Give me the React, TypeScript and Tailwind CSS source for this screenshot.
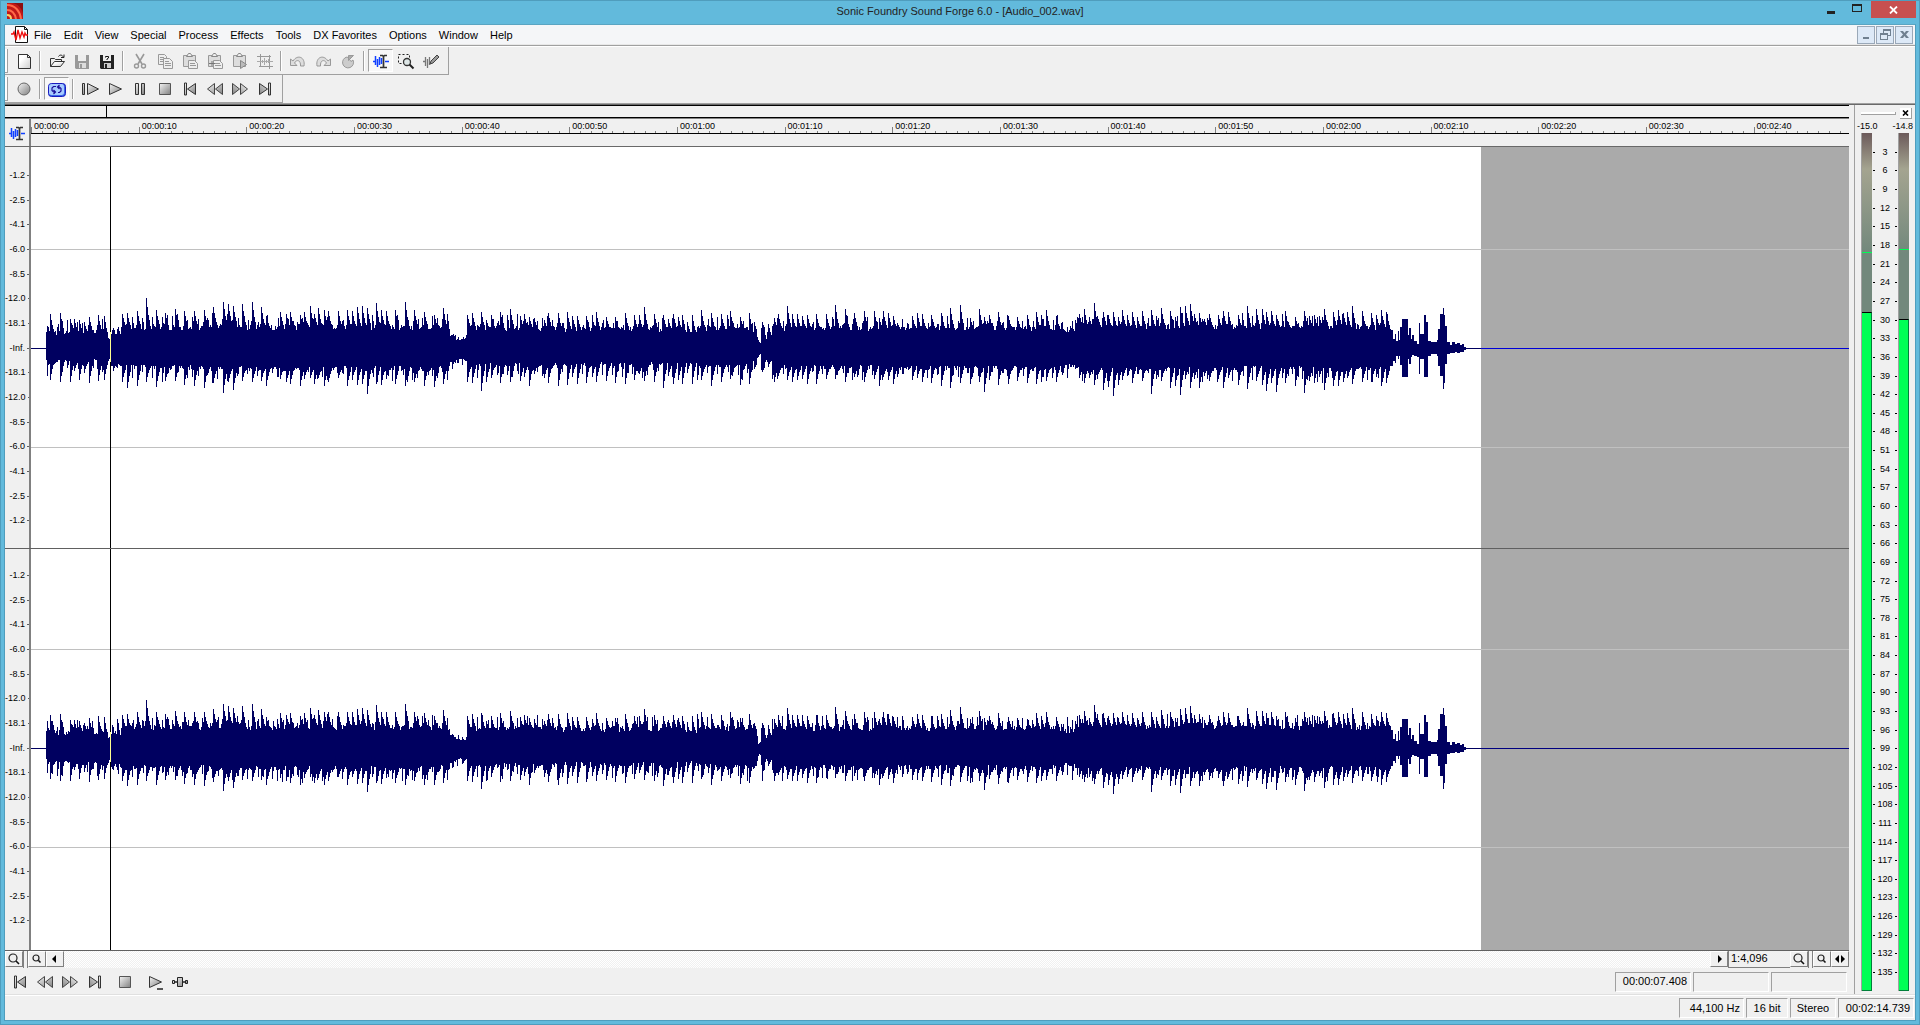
import type { ReactNode } from "react";

/* ---------- Waveform data ---------- */

// x position, height above the axis, depth below it
const BEATS = `50 34 31,60 35 33,70 29 33,74 29 22,79 28 31,84 26 24,89 31 34,98 33 32,104 32 31,122 34 33,127 35 39,137 37 37,146 50 33,
156 38 38,165 35 32,175 39 32,184 37 36,194 37 37,204 38 39,213 41 34,223 46 44,228 44 33,233 42 41,242 44 32,252 46 33,261 41 32,266 32 37,
280 36 30,286 34 33,290 36 35,300 33 37,304 36 30,310 42 29,314 34 35,318 40 29,324 38 37,328 37 33,338 37 29,347 38 37,352 37 29,357 41 36,
362 42 35,367 40 45,376 45 35,381 38 36,386 37 30,395 38 35,405 46 37,414 38 33,424 36 37,434 33 38,443 40 35,467 33 33,472 35 34,481 36 42,
486 28 33,491 33 29,500 36 34,510 39 33,520 32 32,524 34 28,529 31 37,534 30 25,544 28 29,548 35 34,558 35 37,567 36 36,572 32 28,577 32 35,
586 32 34,592 30 28,596 36 33,606 31 32,615 31 34,625 35 35,634 33 31,639 33 25,644 41 32,654 34 33,663 33 39,668 29 27,673 34 35,678 31 31,
682 33 35,687 26 24,692 33 35,701 38 31,711 35 37,721 34 33,730 37 30,740 31 36,749 35 35,754 26 20,762 26 23,768 24 18,774 30 33,778 34 27,
787 42 31,792 34 33,797 34 31,802 32 30,807 33 35,816 34 35,826 34 30,835 43 30,845 39 33,854 35 28,864 37 33,874 37 30,879 30 37,883 37 28,
888 35 31,893 32 35,912 32 31,917 35 28,922 34 33,931 33 34,941 35 37,950 40 39,960 43 34,970 30 35,979 39 33,984 31 43,989 33 31,998 36 36,
1008 32 35,1017 31 32,1027 30 34,1036 36 35,1041 33 33,1046 38 32,1056 32 33,1061 25 23,1070 22 18,1075 28 20,1079 34 29,1084 39 34,1089 31 29,
1094 45 36,1098 29 25,1103 36 41,1108 33 38,1113 36 47,1118 31 36,1122 38 31,1127 32 27,1132 36 34,1137 31 25,1142 37 32,1151 38 45,1156 32 30,
1161 40 32,1170 37 39,1175 31 37,1180 41 46,1185 42 30,1190 44 39,1194 34 30,1199 35 39,1204 29 27,1209 34 32,1218 33 30,1223 37 39,1228 36 29,
1238 33 36,1247 42 40,1256 39 32,1262 39 36,1266 36 42,1271 37 34,1276 33 43,1285 37 34,1295 31 37,1304 37 44,1309 32 32,1314 33 34,1319 32 28,
1324 39 41,1333 36 37,1338 38 37,1343 35 33,1347 36 29,1352 42 35,1362 37 33,1371 35 33,1376 33 28,1381 38 37,1386 36 34`
  .split(",")
  .map((row) => row.trim().split(" ").map(Number));

// solid body of the sound: from x on, height above and below
const BODY = [
  [46, 13, 10], [105, 9, 10], [110, 13, 14], [122, 18, 16], [210, 20, 17], [245, 18, 17], [440, 17, 16],
  [450, 11, 12], [456, 7, 9], [464, 8, 10], [467, 17, 14], [560, 16, 13], [685, 12, 10], [697, 17, 15],
  [750, 13, 12], [757, 4, 4], [761, 16, 16], [765, 8, 9], [772, 17, 16], [1060, 14, 14], [1076, 18, 17], [1391, 17, 16],
];

const TAIL = [
  [1391, 18, 17], [1393, 9, 12], [1395, 14, 14], [1396, 7, 7], [1398, 17, 10], [1399, 8, 7], [1400, 21, 16], [1402, 29, 28],
  [1408, 13, 10], [1409, 20, 15], [1411, 9, 8], [1412, 13, 6], [1414, 7, 7], [1417, 4, 8], [1419, 25, 25], [1420, 14, 10],
  [1424, 33, 28], [1426, 26, 28], [1428, 7, 7], [1431, 6, 5], [1437, 8, 7], [1438, 19, 17], [1440, 34, 27], [1443, 40, 40],
  [1444, 33, 34], [1445, 22, 15], [1447, 6, 5], [1450, 3, 4], [1452, 6, 4], [1455, 4, 3], [1457, 5, 4], [1460, 3, 3],
  [1462, 4, 3], [1464, 1, 1], [1466, 0, 0], [1481, 0, 0],
];

const DECAY = [1, 0.72, 0.48, 0.3];
const ORIGIN = 31;

function wavePath(seed: number, gain: number, axis: number) {
  let state = seed;
  const random = () => {
    state = (state * 1103515245 + 12345) % 2147483648;
    return state / 2147483648;
  };
  const level = (table: number[][], x: number) => {
    let found = table[0];
    for (const row of table) if (row[0] <= x) found = row;
    return found;
  };
  let d = "";
  for (let x = 46; x < 1481; x++) {
    let up: number;
    let down: number;
    if (x >= 1391) {
      [, up, down] = level(TAIL, x);
    } else {
      const [, bodyUp, bodyDown] = level(BODY, x);
      const pulse = x % 5 === 2 ? 13 : x % 5 === 3 ? 8 : 1;
      const loud = bodyUp > 11 ? 1 : 0.5;
      up = bodyUp + (pulse + 4) * random() * loud;
      down = bodyDown + (pulse + 4) * random() * loud;
      for (const [beat, high, low] of BEATS) {
        const age = x - beat;
        if (age === -1) {
          up = Math.max(up, bodyUp + (high - bodyUp) * 0.4 * random());
        } else if (age >= 0 && age < 4) {
          up = Math.max(up, bodyUp + (high * gain - bodyUp) * DECAY[age]);
          down = Math.max(down, bodyDown + (low * gain - bodyDown) * DECAY[age]);
        }
      }
    }
    const top = axis - Math.round(up);
    d += `M${x - ORIGIN} ${top}h1V${axis + 1 + Math.round(down)}h-1z`;
  }
  return d;
}

const DECIBELS = ["-1.2", "-2.5", "-4.1", "-6.0", "-8.5", "-12.0", "-18.1"];
const SCALE = [...DECIBELS, "-Inf.", ...[...DECIBELS].reverse()];
const CHANNELS = [
  { name: "Left channel", axis: 201, d: wavePath(7, 1, 201), rest: "#0000d8", pad: "pt-4 pb-[3px]" },
  { name: "Right channel", axis: 199, d: wavePath(91, 0.96, 199), rest: "#000080", pad: "pt-[14px] pb-[5px]" },
];
const TIMES = Array.from({ length: 17 }, (_, i) => `00:0${Math.floor(i / 6)}:${i % 6}0`);
const METER_MARKS = Array.from({ length: 45 }, (_, i) => (i + 1) * 3);
const MENUS = ["File", "Edit", "View", "Special", "Process", "Effects", "Tools", "DX Favorites", "Options", "Window", "Help"];

/* ---------- Icons ---------- */

const Icon = ({ children, size = 18 }: { children: ReactNode; size?: number }) => (
  <svg width={size} height={size} viewBox={`0 0 ${size} ${size}`} fill="none" aria-hidden="true" className="shrink-0">
    {children}
  </svg>
);

const NewIcon = () => (
  <Icon>
    <path d="M3.5 2.5h9l3 3v11h-12z" fill="url(#paper)" stroke="#333" />
    <path d="M12.5 2.5v3h3" stroke="#333" />
  </Icon>
);
const OpenIcon = () => (
  <Icon>
    <path d="M2.500 14.500v-8h4l1 1h6v2" stroke="#333" fill="#eee" />
    <path d="M2.500 14.500l4-5h10l-4 5z" stroke="#333" fill="url(#paper)" />
    <path d="M10.500 4.500c1-2 4-2 5 1m-2.500 0h3v-3" stroke="#222" />
  </Icon>
);
const SaveIcon = ({ dark }: { dark?: boolean }) => (
  <Icon>
    <path d="M2 3h14v14H3l-1-1z" fill={dark ? "#222" : "#999"} />
    <path d="M5 3h8v6H5z" fill="#eee" />
    <path d="M6 11h7v5H6z" fill={dark ? "#ccc" : "#ddd"} />
    <path d="M7 12h2v4H7z" fill={dark ? "#222" : "#999"} />
    {dark && <path d="M7.500 5.500v-1h3v1.500l-1.500 1v1" stroke="#111" />}
  </Icon>
);
const CutIcon = () => (
  <Icon>
    <path d="M5 2l6 10M13 2L7 12" stroke="#999" strokeWidth="1.600" />
    <circle cx="5.500" cy="14" r="2" stroke="#999" strokeWidth="1.400" />
    <circle cx="12.500" cy="14" r="2" stroke="#999" strokeWidth="1.400" />
  </Icon>
);
const CopyIcon = () => (
  <Icon>
    <path d="M2.500 2.500h6l2 2v8h-8z" fill="#eee" stroke="#999" />
    <path d="M4 5.500h4M4 7.500h3M4 9.500h3" stroke="#999" />
    <path d="M7.500 6.500h6l3 3v7h-9z" fill="#eee" stroke="#999" />
    <path d="M9 9.500h4M9 11.500h6M9 13.500h6" stroke="#999" />
  </Icon>
);
const PasteIcon = ({ mark }: { mark: "page" | "mix" | "play" }) => (
  <Icon>
    <path d="M2.500 3.500h12v11h-12z" fill="#ddd" stroke="#999" />
    <path d="M5.500 4.500l2-3h2l2 3z" fill="#eee" stroke="#888" />
    {mark === "play" ? (
      <path d="M9.500 8.500l6 4-6 4z" fill="#bbb" stroke="#888" />
    ) : (
      <>
        <path d="M7.500 8.500h6l3 3v5h-9z" fill="#eee" stroke="#999" />
        <path d="M9 11.500h5M9 13.500h6" stroke="#999" />
      </>
    )}
    {mark === "mix" && <path d="M3 11.500h6M6 9v5" stroke="#777" />}
  </Icon>
);
const TrimIcon = () => (
  <Icon>
    <path d="M1 4.500h14M4.500 2v13M13.500 3v14M3 14.500h14" stroke="#999" />
    <path d="M1 9.500h16M6.500 8v3M8.500 6v7M10.500 8v3M12.500 7v4" stroke="#aaa" />
  </Icon>
);
const UndoIcon = ({ flip }: { flip?: boolean }) => (
  <Icon>
    <g transform={flip ? "translate(18 0) scale(-1 1)" : undefined}>
      <path d="M1.500 7v6.500h6.500l-2.500-2.500c2-4 6.500-3 6 3h3.500c1.500-9-6.500-12-11-5z" fill="#ddd" stroke="#999" />
    </g>
  </Icon>
);
const RepeatIcon = () => (
  <Icon>
    <path d="M8 5A5.500 5.500 0 1 0 14 8l-2 1.500L9.500 6z" fill="#ccc" stroke="#999" />
    <path d="M9.500 8.500v-5h5z" fill="#aaa" stroke="#999" />
  </Icon>
);
const EditToolIcon = () => (
  <Icon>
    <path d="M1 9.500h3M3.500 4v9M5.500 7v8M7.500 5v8M9.500 6v6M13 9.500h4" stroke="#1040ff" strokeWidth="1.500" />
    <path d="M8 3.500h2.500l1 1 1-1H15M11.500 4v11M8 15.500h7" stroke="#333" strokeWidth="1.700" />
  </Icon>
);
const MagnifyToolIcon = () => (
  <Icon>
    <path d="M1.500 2.500h11v9h-11z" stroke="#222" strokeDasharray="2 2" />
    <circle cx="10" cy="10" r="3.500" fill="#dde6e6" stroke="#333" strokeWidth="1.300" />
    <path d="M12.500 12.500l4 4" stroke="#222" strokeWidth="2" />
  </Icon>
);
const PencilIcon = () => (
  <Icon>
    <path d="M1 9.500h2M3.500 5v9M5.500 7v9M7.500 5v8" stroke="#777" strokeWidth="1.300" />
    <path d="M8 12l1-3 6-6 2 2-6 6z" fill="#999" stroke="#444" />
  </Icon>
);
const RecordIcon = () => (
  <Icon>
    <circle cx="9" cy="9" r="6" fill="url(#metal)" stroke="#666" />
  </Icon>
);
const LoopIcon = () => (
  <Icon>
    <rect x=".5" y="3.500" width="17" height="13" rx="3" fill="#3a68e8" stroke="#1a1ac0" />
    <rect x="1" y="4" width="15" height="11" rx="2.500" fill="#a8ccff" />
    <path d="M8 6.500H5.500l-1.500 1.500v2.500l1.500 1.500H7M5.500 10l2 2-2 2M10 12.500h1.500L13 11V8.500L11.500 7H10M11.500 5l-2 2 2 2" stroke="#1c109a" strokeWidth="1.200" />
  </Icon>
);

const PlayIcon = ({ mode }: { mode?: "all" | "plug" }) => (
  <Icon>
    {mode === "all" && <path d="M1.500 3.500h2v11h-2z" fill="url(#metal)" stroke="#333" />}
    <path d={mode === "all" ? "M6.500 3.500l11 5.500-11 5.500z" : "M3.500 3.500l12 5.500-12 5.500z"} fill="url(#metal)" stroke="#333" />
    {mode === "plug" && <path d="M11 16h6" stroke="#222" strokeWidth="1.500" />}
  </Icon>
);
const PauseIcon = () => (
  <Icon>
    <path d="M4.500 3.500h3v11h-3zM10.500 3.500h3v11h-3z" fill="url(#metal)" stroke="#333" />
  </Icon>
);
const StopIcon = () => (
  <Icon>
    <path d="M3.500 3.500h11v11h-11z" fill="url(#metal)" stroke="#555" />
  </Icon>
);
const SkipIcon = ({ flip }: { flip?: boolean }) => (
  <Icon>
    <g transform={flip ? "translate(18 0) scale(-1 1)" : undefined}>
      <path d="M3.500 3v12h2V3zM14.500 3.500v11L6.500 9z" fill="url(#metal)" stroke="#333" />
    </g>
  </Icon>
);
const WindIcon = ({ flip }: { flip?: boolean }) => (
  <Icon>
    <g transform={flip ? "translate(18 0) scale(-1 1)" : undefined}>
      <path d="M8.500 3.500v11L1.500 9zM16.500 3.500v11L9.500 9z" fill="url(#metal)" stroke="#444" />
    </g>
  </Icon>
);
const SliderIcon = () => (
  <Icon>
    <path d="M3 9h12" stroke="#222" strokeWidth="1.500" />
    <path d="M1.500 7.500h2v3h-2zM14.500 7.500h2v3h-2zM6.500 4.500h5v9h-5z" fill="url(#metal)" stroke="#222" />
  </Icon>
);
const LensIcon = ({ small }: { small?: boolean }) => (
  <Icon size={12}>
    <circle cx="5" cy="5" r={small ? 3 : 4} stroke="#222" strokeWidth="1.200" fill="#eee" />
    <path d={small ? "M7.500 7.500l2 2" : "M8 8l3 3"} stroke="#111" strokeWidth="1.600" />
  </Icon>
);
const ArrowIcon = ({ d }: { d: string }) => (
  <Icon size={12}>
    <path d={d} fill="#000" />
  </Icon>
);

/* ---------- Controls ---------- */

const ToolButton = ({ label, active, children }: { label: string; active?: boolean; children: ReactNode }) => (
  <button
    type="button"
    aria-label={label}
    className={`flex h-[23px] w-[25px] shrink-0 items-center justify-center ${
      active ? "border border-t-[#a0a0a0] border-l-[#a0a0a0] border-r-white border-b-white bg-[#f8f8f8]" : ""
    }`}
  >
    {children}
  </button>
);

const Divider = () => (
  <div className="flex w-2 shrink-0 justify-center">
    <div className="h-5 w-0.5 border-l border-[#a0a0a0] bg-white" />
  </div>
);

const Toolbar = ({ label, children }: { label: string; children: ReactNode }) => (
  <div role="toolbar" aria-label={label} className="flex h-7 w-fit items-center border-r border-b border-[#a0a0a0] pr-[5px]">
    <div className="mr-[3px] h-6 w-[3px] border-r border-b border-[#a0a0a0] bg-white" />
    {children}
  </div>
);

const SmallButton = ({ label, children }: { label: string; children: ReactNode }) => (
  <button
    type="button"
    aria-label={label}
    className="flex h-4 w-[18px] shrink-0 items-center justify-center border border-t-white border-l-white border-r-[#808080] border-b-[#808080] bg-[#f0f0f0]"
  >
    {children}
  </button>
);

const Splitter = () => <div className="w-[5px] shrink-0 border-x border-[#808080] bg-[#f0f0f0]" />;

const Field = ({ className, children }: { className: string; children?: ReactNode }) => (
  <div
    className={`flex h-5 shrink-0 items-center border border-t-[#a0a0a0] border-l-[#a0a0a0] border-r-white border-b-white ${className}`}
  >
    {children}
  </div>
);

/* ---------- Panels ---------- */

const TitleBar = () => (
  <header className="flex h-[23px] shrink-0 items-start">
    <div className="w-[140px] pt-[2px] pl-[3px]">
      <svg width="16" height="16" viewBox="0 0 16 16" fill="none" aria-hidden="true">
        <path d="M0 0h16v16H0z" fill="#c01818" />
        <path d="M5 0h11v11C15 5 11 1 5 0z" fill="#8c1010" />
        <path d="M0 2c8 0 13 6 14 14M0 7c5 0 8 4 9 9" stroke="#ff6a48" strokeWidth="2" />
        <path d="M0 12c3 0 4 2 4 4" stroke="#ffd060" strokeWidth="2" />
      </svg>
    </div>
    <h1 className="flex-1 pt-[2px] text-center leading-4 text-[#222]">Sonic Foundry Sound Forge 6.0 - [Audio_002.wav]</h1>
    <div className="flex w-[140px] justify-end">
      <button type="button" aria-label="Minimize" className="flex h-[17px] w-7 items-center justify-center">
        <svg width="10" height="10" aria-hidden="true"><path d="M1 6h8v3H1z" fill="#222" /></svg>
      </button>
      <button type="button" aria-label="Maximize" className="mr-0.5 flex h-[14px] w-6 items-center justify-center">
        <svg width="10" height="8" aria-hidden="true"><path d="M0 0h10v8H0zM1 2v5h8V2z" fill="#222" fillRule="evenodd" /></svg>
      </button>
      <button type="button" aria-label="Close" className="flex h-[17px] w-[45px] items-center justify-center bg-[#c75050]">
        <svg width="9" height="8" viewBox="0 0 9 8" aria-hidden="true"><path d="M1 .5l7 7M8 .5l-7 7" stroke="#fff" strokeWidth="1.800" /></svg>
      </button>
    </div>
  </header>
);

const MenuBar = () => (
  <nav className="flex h-[20px] shrink-0 items-center border-b border-[#e8e8e8] bg-[#f5f6f8]">
    <svg width="18" height="17" viewBox="0 0 18 17" fill="none" aria-hidden="true" className="ml-[6px]">
      <path d="M4.500.5h9l3 3v13h-12z" fill="#fff" stroke="#111" />
      <path d="M13.500.5v3h3" stroke="#111" />
      <path d="M0 8h2l1-2 2 8 2-10 2 8 2-6 2 5 1-4 1 2h2" stroke="#f01010" strokeWidth="1.400" />
    </svg>
    <div className="flex flex-1 gap-3 pl-[5px]">
      {MENUS.map((menu) => (
        <button key={menu} type="button" className="leading-4">
          {menu}
        </button>
      ))}
    </div>
    <div className="flex gap-px pr-0.5">
      {[
        { label: "Minimize document", d: "M3 9h6v2H3z" },
        { label: "Restore document", d: "M4 1h8v7h-3v4H1V5h3zM5 3v2h4v2h2V3zM2 7v4h6V7z" },
        { label: "Close document", d: "M2 3h3l1.500 2L8 3h3L8 6.500l3 3.500H8L6.500 8 5 10H2l3-3.500z" },
      ].map(({ label, d }) => (
        <button
          key={label}
          type="button"
          aria-label={label}
          className="flex h-[18px] w-[18px] items-center justify-center border border-[#9aa8b8] bg-[#dde9f7]"
        >
          <svg width="13" height="13" aria-hidden="true"><path d={d} fill="#708090" fillRule="evenodd" /></svg>
        </button>
      ))}
    </div>
  </nav>
);

const Ruler = () => (
  <div className="flex h-[29px] shrink-0 border-t border-b border-t-[#808080] border-b-[#696969]">
    <div className="flex w-[26px] shrink-0 items-center justify-center border-r-2 border-[#808080]">
      <EditToolIcon />
    </div>
    <div className="min-w-0 flex-1">
      <div className="flex h-[15px] overflow-hidden border-b border-black">
        {TIMES.map((time) => (
          <div key={time} className="relative h-full shrink-0 basis-[5.922%] pl-[3px] text-[9px] leading-[14px]">
            {time}
            <div className="absolute bottom-0 left-0 h-[6px] w-px bg-[#808080]" />
            <div className="absolute inset-x-0 bottom-0 flex h-[2px]">
              {Array.from({ length: 10 }, (_, i) => (
                <span key={i} className="flex-1 border-l border-[#808080]" />
              ))}
            </div>
          </div>
        ))}
      </div>
    </div>
  </div>
);

const Channel = ({ name, axis, d, rest, pad }: (typeof CHANNELS)[number]) => (
  <div className="flex min-h-0 flex-1 border-b border-[#606060]">
    <div className={`flex w-[26px] shrink-0 flex-col border-r-2 border-[#808080] ${pad}`}>
      {SCALE.map((mark, i) => (
        <div key={i} className="flex min-h-0 flex-1 items-center justify-end text-[9px] leading-none">
          <span>{mark}</span>
          <span className="ml-[2px] h-px w-[2px] bg-[#606060]" />
        </div>
      ))}
      <div className="h-3 shrink-0" />
    </div>
    <svg
      role="img"
      aria-label={name}
      viewBox="0 0 1818 401"
      preserveAspectRatio="none"
      shapeRendering="crispEdges"
      className="h-full min-w-0 flex-1 bg-white"
    >
      <path d="M1450 0h368v401h-368z" fill="#aaaaaa" />
      <path d={`M0 ${axis - 99}h1818v1H0zM0 ${axis + 99}h1818v1H0z`} fill="#c0c0c0" />
      <path d={`M0 ${axis}h1450v1H0z`} fill="#000060" />
      <path d={`M1450 ${axis}h368v1h-368z`} fill={rest} />
      <path d={d} fill="#000060" />
      <path d="M79 0h1v401h-1z" fill="#000" />
      <path d={`M79 ${axis - 16}h1v30h-1z`} fill="#ffff90" />
    </svg>
  </div>
);

const ScrollRow = () => (
  <div className="flex h-[17px] shrink-0">
    <SmallButton label="Zoom in vertically"><LensIcon /></SmallButton>
    <Splitter />
    <SmallButton label="Zoom out vertically"><LensIcon small /></SmallButton>
    <SmallButton label="Scroll left"><ArrowIcon d="M7 2v8L3 6z" /></SmallButton>
    <div className="flex-1 bg-[repeating-conic-gradient(#ffffff_0_25%,#f0f0f0_0_50%)] bg-[length:2px_2px]" />
    <SmallButton label="Scroll right"><ArrowIcon d="M5 2v8l4-4z" /></SmallButton>
    <div className="w-[62px] border-b border-l border-[#808080] pl-[2px] leading-[15px]">1:4,096</div>
    <SmallButton label="Zoom in"><LensIcon /></SmallButton>
    <Splitter />
    <SmallButton label="Zoom out"><LensIcon small /></SmallButton>
    <SmallButton label="Zoom selection"><ArrowIcon d="M5 2v8L1 6zM7 2v8l4-4z" /></SmallButton>
  </div>
);

const Transport = () => (
  <div className="flex h-[27px] shrink-0 items-center pl-[2px]">
    <ToolButton label="Go to start"><SkipIcon /></ToolButton>
    <ToolButton label="Rewind"><WindIcon /></ToolButton>
    <ToolButton label="Forward"><WindIcon flip /></ToolButton>
    <ToolButton label="Go to end"><SkipIcon flip /></ToolButton>
    <div className="w-[5px]" />
    <ToolButton label="Stop"><StopIcon /></ToolButton>
    <div className="w-[5px]" />
    <ToolButton label="Play normal"><PlayIcon mode="plug" /></ToolButton>
    <ToolButton label="Scrub"><SliderIcon /></ToolButton>
    <div className="ml-auto flex gap-0.5 pr-0.5">
      <Field className="w-[76px] justify-end pr-[3px]">00:00:07.408</Field>
      <Field className="w-[76px]" />
      <Field className="w-[76px]" />
    </div>
  </div>
);

const MeterBar = ({ peak, filled }: { peak: string; filled: string }) => (
  <div className="relative flex w-[11px] shrink-0 flex-col border-l border-[#a0a0a0] bg-[linear-gradient(to_bottom,#6c5a5a_0,#a4a490_36px,#72887c_120px,#72887c_100%)]">
    <div className={`absolute inset-x-0 h-px bg-[#00ff55] ${peak}`} />
    <div className={`absolute inset-x-0 bottom-0 border-t border-r border-b border-t-black border-r-[#00803a] border-b-[#00803a] bg-[#00ff55] ${filled}`} />
  </div>
);

const Meters = () => (
  <aside className="flex w-[61px] shrink-0 flex-col border-l border-[#a0a0a0] pb-1 text-[9px]">
    <div className="flex h-[15px] items-center justify-between pt-[2px] pr-[3px] pl-[6px]">
      <div className="h-[3px] w-[35px] border-r border-b border-[#a0a0a0] bg-white" />
      <button type="button" aria-label="Close meters" className="flex h-[11px] w-3 items-center justify-center border-r border-b border-[#a0a0a0] bg-white">
        <svg width="7" height="6" viewBox="0 0 7 6" aria-hidden="true"><path d="M1 .5l5 5M6 .5l-5 5" stroke="#000" strokeWidth="1.600" /></svg>
      </button>
    </div>
    <div className="flex h-[13px] items-center justify-between pr-[2px] pl-[2px]">
      <span>-15.0</span>
      <span>-14.8</span>
    </div>
    <div className="flex min-h-0 flex-1 pr-[6px] pl-[6px]">
      <MeterBar peak="top-[119px]" filled="top-[179px]" />
      <ol className="flex flex-1 flex-col pt-[10px] pb-[9px]">
        {METER_MARKS.map((mark) => (
          <li key={mark} className="flex min-h-0 flex-1 items-center justify-between leading-none">
            <span className="ml-px h-px w-[2px] bg-black" />
            {mark}
            <span className="mr-px h-px w-[2px] bg-black" />
          </li>
        ))}
      </ol>
      <MeterBar peak="top-[116px]" filled="top-[186px]" />
    </div>
  </aside>
);

export default function App() {
  return (
    <div className="flex h-screen flex-col border border-[#4f9dbd] bg-[#62badc] px-[3px] pb-[3px] font-['Liberation_Sans',Arial,sans-serif] text-[11px] text-black">
      <svg width="0" height="0" className="absolute" aria-hidden="true">
        <defs>
          <linearGradient id="metal" x1="0" y1="0" x2="1" y2="1">
            <stop offset="0" stopColor="#f4f4f4" />
            <stop offset="1" stopColor="#808080" />
          </linearGradient>
          <linearGradient id="paper" x1="0" y1="0" x2="1" y2="1">
            <stop offset="0.3" stopColor="#fff" />
            <stop offset="1" stopColor="#ccc" />
          </linearGradient>
        </defs>
      </svg>
      <TitleBar />
      <main className="flex min-h-0 flex-1 flex-col border border-[#4f9dbd] border-t-[#5aa5c2] bg-[#f0f0f0]">
        <MenuBar />
        <div className="shrink-0 border-t border-b border-t-[#a0a0a0] border-b-[#696969]">
          <div className="border-t border-b border-t-white border-b-[#a0a0a0]">
            <Toolbar label="Standard">
              <ToolButton label="New"><NewIcon /></ToolButton>
              <Divider />
              <ToolButton label="Open"><OpenIcon /></ToolButton>
              <ToolButton label="Save"><SaveIcon /></ToolButton>
              <ToolButton label="Save as"><SaveIcon dark /></ToolButton>
              <Divider />
              <ToolButton label="Cut"><CutIcon /></ToolButton>
              <ToolButton label="Copy"><CopyIcon /></ToolButton>
              <ToolButton label="Paste"><PasteIcon mark="page" /></ToolButton>
              <ToolButton label="Mix"><PasteIcon mark="mix" /></ToolButton>
              <ToolButton label="Play clipboard"><PasteIcon mark="play" /></ToolButton>
              <ToolButton label="Trim"><TrimIcon /></ToolButton>
              <Divider />
              <ToolButton label="Undo"><UndoIcon /></ToolButton>
              <ToolButton label="Redo"><UndoIcon flip /></ToolButton>
              <ToolButton label="Repeat"><RepeatIcon /></ToolButton>
              <Divider />
              <ToolButton label="Edit tool" active><EditToolIcon /></ToolButton>
              <ToolButton label="Magnify tool"><MagnifyToolIcon /></ToolButton>
              <ToolButton label="Pencil tool"><PencilIcon /></ToolButton>
            </Toolbar>
            <Toolbar label="Transport">
              <ToolButton label="Record"><RecordIcon /></ToolButton>
              <Divider />
              <ToolButton label="Loop playback" active><LoopIcon /></ToolButton>
              <Divider />
              <ToolButton label="Play all"><PlayIcon mode="all" /></ToolButton>
              <ToolButton label="Play"><PlayIcon /></ToolButton>
              <ToolButton label="Pause"><PauseIcon /></ToolButton>
              <ToolButton label="Stop"><StopIcon /></ToolButton>
              <ToolButton label="Go to start"><SkipIcon /></ToolButton>
              <ToolButton label="Rewind"><WindIcon /></ToolButton>
              <ToolButton label="Forward"><WindIcon flip /></ToolButton>
              <ToolButton label="Go to end"><SkipIcon flip /></ToolButton>
            </Toolbar>
          </div>
        </div>

        <div className="flex min-h-0 flex-1">
          <div className="mr-[5px] flex min-w-0 flex-1 flex-col">
            {/* Overview strip */}
            <div className="flex h-[13px] shrink-0 border-y border-black">
              <div className="w-[5.550%] border-r border-black" />
            </div>
            <Ruler />
            {CHANNELS.map((channel) => (
              <Channel key={channel.name} {...channel} />
            ))}
            <ScrollRow />
            <Transport />
          </div>
          <Meters />
        </div>

        <footer className="flex h-[25px] shrink-0 items-center justify-end gap-0.5 border-t border-white pr-px shadow-[0_-1px_0_#e0e0e0]">
          <Field className="w-[65px] justify-end pr-[3px]">44,100 Hz</Field>
          <Field className="w-[42px] justify-center">16 bit</Field>
          <Field className="w-[46px] justify-center">Stereo</Field>
          <Field className="w-[76px] justify-end pr-[3px]">00:02:14.739</Field>
        </footer>
      </main>
    </div>
  );
}
